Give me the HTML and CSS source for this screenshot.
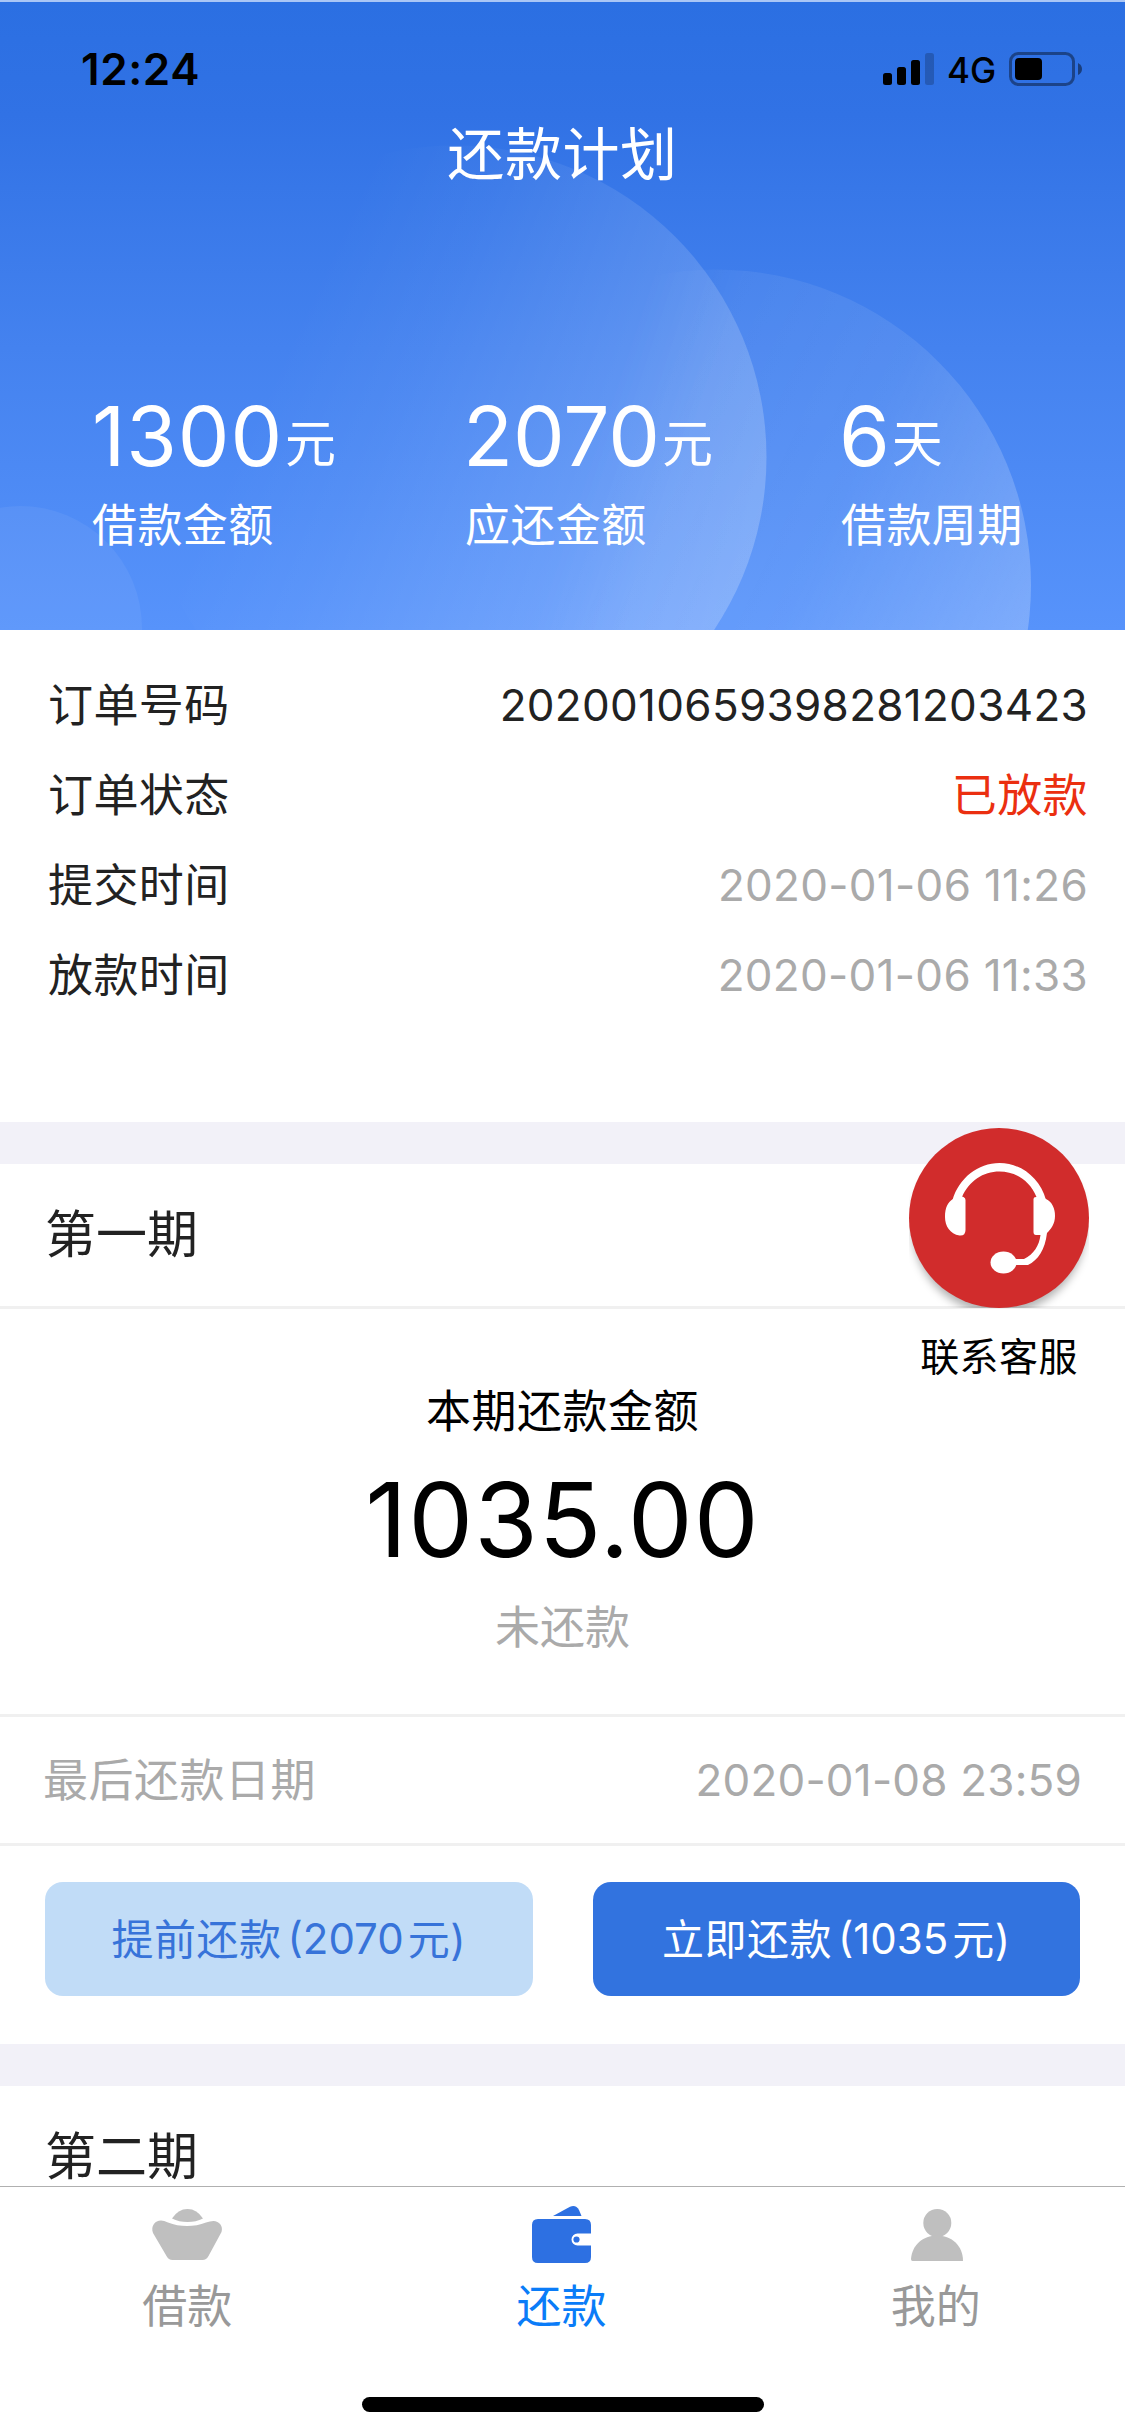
FILE: index.html
```html
<!DOCTYPE html>
<html lang="zh-CN">
<head>
<meta charset="utf-8">
<title>还款计划</title>
<link rel="stylesheet" href="styles.css">
</head>
<body>
<div class="screen">
  <header class="hero">
    <svg class="hero-art" viewBox="0 0 1125 630" aria-hidden="true">
      <defs>
        <linearGradient id="orbA" gradientUnits="userSpaceOnUse" x1="310" y1="290" x2="765" y2="500">
          <stop offset="0" stop-color="#fff" stop-opacity="0"/>
          <stop offset=".25" stop-color="#fff" stop-opacity=".04"/>
          <stop offset="1" stop-color="#fff" stop-opacity=".22"/>
        </linearGradient>
        <linearGradient id="orbB" gradientUnits="userSpaceOnUse" x1="640" y1="420" x2="1030" y2="600">
          <stop offset="0" stop-color="#fff" stop-opacity=".06"/>
          <stop offset=".5" stop-color="#fff" stop-opacity=".09"/>
          <stop offset="1" stop-color="#fff" stop-opacity=".23"/>
        </linearGradient>
        <linearGradient id="orbBFade" gradientUnits="userSpaceOnUse" x1="645" y1="275" x2="735" y2="305">
          <stop offset="0" stop-color="#000"/>
          <stop offset="1" stop-color="#fff"/>
        </linearGradient>
        <mask id="orbBMask" maskUnits="userSpaceOnUse" x="0" y="0" width="1125" height="630"><rect width="1125" height="630" fill="url(#orbBFade)"/></mask>
      </defs>
      <circle cx="455" cy="457" r="311.500" fill="url(#orbA)"/>
      <circle cx="715.500" cy="585" r="315.500" fill="url(#orbB)" mask="url(#orbBMask)"/>
      <circle cx="20" cy="628" r="122" fill="#fff" fill-opacity=".06"/>
    </svg>
    <div class="status">
      <span class="clock">12:24</span>
      <div class="status-icons">
        <svg width="36" height="32" viewBox="0 0 36 32">
          <rect y="20" width="9" height="12" rx="2.5"/>
          <rect x="14" y="14" width="9" height="18" rx="2.5"/>
          <rect x="28" y="7" width="9" height="25" rx="2.5"/>
        </svg>
        <svg class="bar-off" width="9" height="32" viewBox="0 0 9 32"><rect width="9" height="32" rx="2.5" fill-opacity=".2"/></svg>
        <span class="net">4G</span>
        <svg width="74" height="34" viewBox="0 0 74 34">
          <rect x="1.5" y="1.5" width="63" height="31" rx="8" fill="none" stroke="#000" stroke-opacity=".4" stroke-width="3"/>
          <rect x="6" y="6" width="27" height="22" rx="4"/>
          <path d="M69 11q4 2 4 6t-4 6z" fill-opacity=".45"/>
        </svg>
      </div>
    </div>
    <h1 class="title">还款计划</h1>
    <div class="stats">
      <div class="stat"><div class="figure"><span class="num num-first">1300</span><span class="unit">元</span></div><div class="caption">借款金额</div></div>
      <div class="stat"><div class="figure"><span class="num">2070</span><span class="unit">元</span></div><div class="caption">应还金额</div></div>
      <div class="stat"><div class="figure"><span class="num">6</span><span class="unit">天</span></div><div class="caption">借款周期</div></div>
    </div>
  </header>

  <section class="order">
    <div class="row"><span>订单号码</span><span class="order-no">2020010659398281203423</span></div>
    <div class="row"><span>订单状态</span><span class="paid">已放款</span></div>
    <div class="row"><span>提交时间</span><span class="muted">2020-01-06 11:26</span></div>
    <div class="row"><span>放款时间</span><span class="muted">2020-01-06 11:33</span></div>
  </section>

  <section class="term">
    <h2 class="term-head">第一期</h2>
    <div class="due">
      <div class="due-label">本期还款金额</div>
      <div class="due-sum">1035.00</div>
      <div class="due-state">未还款</div>
    </div>
    <div class="deadline"><span>最后还款日期</span><span class="deadline-date">2020-01-08 23:59</span></div>
    <div class="actions">
      <button class="btn btn-light"><span>提前还款</span><span class="btn-num">(2070</span><span>元)</span></button>
      <button class="btn btn-solid"><span>立即还款</span><span class="btn-num">(1035</span><span>元)</span></button>
    </div>
  </section>

  <section class="term term-next">
    <h2 class="term-head">第二期</h2>
  </section>

  <nav class="tabs">
    <div class="tab">
      <svg width="70" height="57" viewBox="0 0 70 57">
        <path d="M20 12.500Q26 3 35.500 3T51 12.500Q44 16 35.500 16T20 12.500z"/>
        <path d="M9 14.500Q12 14.500 16 16.500Q25 20 35 20T54 16.500Q58 15 61.500 15C67 15 71.500 20 69.500 26L56.500 50Q54.500 54 50.500 54H20.500Q16.500 54 14.500 50L1 27C-1.500 20 3 14.500 9 14.500z"/>
      </svg>
      <span>借款</span>
    </div>
    <div class="tab tab-on">
      <svg width="58" height="57" viewBox="0 0 58 57">
        <path d="M21 10L38 .800Q44-1.500 47 4L49.500 10z"/>
        <path d="M6 13H53Q59 13 59 19V27.500H45.500a6 6 0 0 0 0 12H59V51Q59 57 53 57H6Q0 57 0 51V19Q0 13 6 13z"/>
        <circle cx="44.500" cy="33.500" r="3.100"/>
      </svg>
      <span>还款</span>
    </div>
    <div class="tab">
      <svg width="50" height="57" viewBox="0 0 50 57">
        <circle cx="26.300" cy="17" r="14"/>
        <path d="M1.500 55Q0 55 0 53C1 39 12 29.500 26 29.500S52 39 52 55z"/>
      </svg>
      <span>我的</span>
    </div>
  </nav>
  <div class="home-bar"></div>

  <a class="support">
    <svg width="180" height="180" viewBox="0 0 180 180">
      <defs><filter id="soft" x="-10%" y="-10%" width="120%" height="120%"><feGaussianBlur stdDeviation="4.500"/></filter></defs>
      <circle cx="90" cy="99" r="87" fill="#000" fill-opacity=".3" filter="url(#soft)"/>
      <circle cx="90" cy="90" r="90" fill="#d12c2c"/>
      <g fill="#fff">
        <path d="M43.500 72C50 50 69 35 90.500 35S131 50 137 72L127.500 69C121 53 107 43.500 90.500 43.500S60 53 53 69z"/>
        <path d="M56.500 72V102Q56.500 108 50.500 107.500C41 106 36 98 36 89C36 79 39 74 44 71Q50 67 54.500 69Q56.500 70 56.500 72z"/>
        <path d="M124.500 71Q124.500 69 127 69Q133 68 137 71C143 74 146 80 146 88S142 101 138 105C136 122 129 132 119 137H106V131H115C125 126 130 118 131.500 107H127Q124.500 107 124.500 104z"/>
        <ellipse cx="94.500" cy="134.500" rx="13" ry="11"/>
      </g>
    </svg>
    <span>联系客服</span>
  </a>
</div>
</body>
</html>
```
FILE: styles.css
```css
* { box-sizing: border-box; }

body {
  margin: 0;
  background: #fff;
  color: #222;
  font-family: Inter, "Noto Sans CJK SC", sans-serif;
}

.screen {
  position: relative;
  display: flex;
  flex-direction: column;
  width: 1125px;
  height: 2436px;
  overflow: hidden;
  background: #fff;
}

/* header */
.hero {
  position: relative;
  height: 630px;
  border-top: 2px solid #a9c6f6;
  background: linear-gradient(#2b6fe2, #3172e5 18%, #4482ef 55%, #5793fb);
  color: #fff;
}
.hero-art { position: absolute; left: 0; top: -2px; width: 1125px; height: 630px; }
.status, .title, .stats { position: relative; }
.status {
  display: flex;
  justify-content: space-between;
  height: 98px;
  padding: 50px 42px 0 81px;
  color: #000;
}
.clock { font-size: 44px; font-weight: 600; line-height: 34px; letter-spacing: .6px; }
.status-icons { display: flex; align-items: flex-start; height: 34px; }
.status-icons svg { display: block; }
.status-icons svg:first-child { margin-top: 1px; overflow: visible; }
.bar-off { margin: 1px 13px 0 6px; }
.net { width: 62px; font-size: 35px; font-weight: 500; line-height: 37px; }
.title {
  margin: 17px 0 0;
  text-align: center;
  font-size: 57px;
  font-weight: 400;
  line-height: 76px;
  letter-spacing: .6px;
}
.stats { display: grid; grid-template-columns: 373px 376px 1fr; padding: 196px 0 0 92px; }
.figure { display: flex; height: 98px; line-height: 95px; }
.num { margin-left: -2px; font-size: 82px; }
.num-first { margin-left: 0; letter-spacing: .9px; }
.unit { margin-left: 2px; font-size: 51px; line-height: 110px; }
.caption { margin-top: 9px; font-size: 45px; line-height: 60px; letter-spacing: .4px; }

/* order summary */
.order { height: 492px; padding: 31px 37px 0 48px; }
.row {
  display: flex;
  justify-content: space-between;
  font-size: 45px;
  line-height: 90px;
  letter-spacing: .4px;
}
.order-no, .row .muted { font-size: 44px; line-height: 88px; letter-spacing: .3px; }
.muted { color: #aaa; }
.paid { color: #eb2f10; }

/* instalments */
.term { border-top: 42px solid #f2f1f8; }
.term-head {
  height: 145px;
  margin: 0;
  padding-left: 45px;
  border-bottom: 3px solid #f0f0f0;
  font-size: 51px;
  font-weight: 400;
  line-height: 142px;
}
.due {
  height: 408px;
  padding-top: 73px;
  border-bottom: 3px solid #f0f0f0;
  text-align: center;
  color: #000;
}
.due-label { font-size: 45px; line-height: 60px; letter-spacing: .5px; }
.due-sum { font-size: 103px; line-height: 156px; letter-spacing: 1px; }
.due-state { font-size: 45px; line-height: 60px; color: #aaa; }
.deadline {
  display: flex;
  justify-content: space-between;
  height: 129px;
  padding: 0 43px;
  border-bottom: 3px solid #f0f0f0;
  font-size: 45px;
  line-height: 128px;
  letter-spacing: .5px;
  color: #aaa;
}
.deadline-date { font-size: 44px; line-height: 126px; letter-spacing: .2px; }
.actions { display: flex; gap: 60px; height: 198px; padding: 36px 45px 0; }
.btn {
  display: flex;
  flex: 1;
  justify-content: center;
  height: 114px;
  padding: 0;
  border: 0;
  border-radius: 18px;
  font: 42px/114px Inter, "Noto Sans CJK SC", sans-serif;
  letter-spacing: .5px;
}
.btn span { line-height: 116px; }
.btn .btn-num { margin: 0 4px 0 6px; line-height: 114px; letter-spacing: 0; }
.btn-light { background: #c1dcf7; color: #3773d9; }
.btn-solid { background: #3273df; color: #fff; }
.term-next { height: 142px; overflow: hidden; }

/* tab bar */
.tabs {
  display: grid;
  grid-template-columns: repeat(3, 1fr);
  height: 211px;
  padding: 19px 2px 0 0;
  border-top: 1px solid #b0b0b0;
  background: #fff;
}
.tab {
  display: flex;
  flex-direction: column;
  align-items: center;
  gap: 14px;
  font-size: 45px;
  line-height: 60px;
  color: #999;
}
.tab svg { display: block; fill: #bfbfbf; overflow: visible; }
.tab-on { color: #0a7cf8; }
.tab-on svg { fill: #2d70e2; }
.home-bar { width: 402px; height: 15px; margin: 0 auto; border-radius: 8px; background: #000; }

/* floating help button */
.support {
  position: absolute;
  left: 909px;
  top: 1128px;
  width: 180px;
  text-align: center;
  font-size: 39px;
  line-height: 52px;
  letter-spacing: .4px;
  color: #000;
}
.support svg { display: block; margin-bottom: 23px; overflow: hidden; }
```
